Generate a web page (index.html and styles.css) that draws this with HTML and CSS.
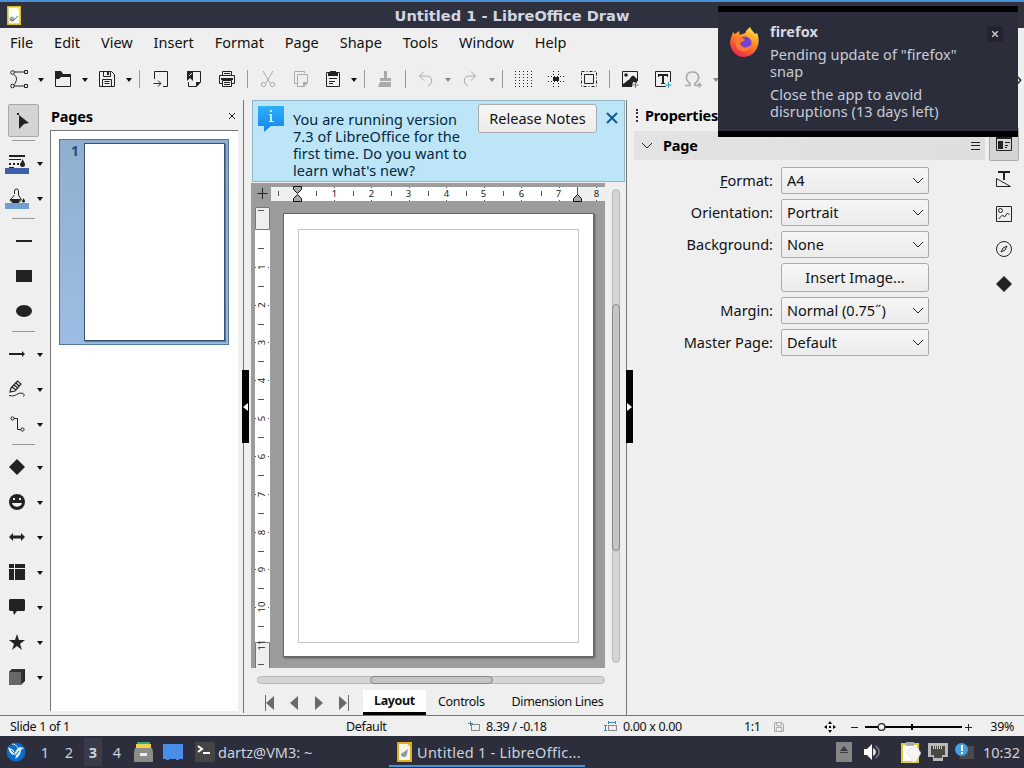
FILE: index.html
```html
<!DOCTYPE html>
<html lang="en">
<head>
    <meta charset="UTF-8">
    <meta name="viewport" content="width=device-width, initial-scale=1.0">
    <title>Untitled 1 - LibreOffice Draw</title>
    <link rel="stylesheet" href="styles.css">
</head>
<body>
    <!-- title bar -->
    <header class="titlebar">
        <svg class="app-icon" width="14" height="19" viewBox="0 0 14 19"><path d="M.8.8h12.400v17.400H.8z" fill="#fffef5" stroke="#d9bd27" stroke-width="1.600"/><path d="M9 1h4v4z" fill="#f5df70"/><circle cx="5" cy="13" r="2.500" fill="#aab"/><path d="M3 13l3 2 5-5" stroke="#656a8c" fill="none"/></svg>
        <h1>Untitled 1 - LibreOffice Draw</h1>
    </header>

    <nav class="menubar">
        <span>File</span><span>Edit</span><span>View</span><span>Insert</span><span>Format</span><span>Page</span><span>Shape</span><span>Tools</span><span>Window</span><span>Help</span>
    </nav>

    <!-- main toolbar -->
    <div class="toolbar">
        <div class="tool split"><svg width="20" height="20" viewBox="0 0 20 20"><path d="M5 3h10M4.500 5c4 3 4 7 0 11M5 17h10" class="ln"/><circle cx="3.500" cy="3.500" r="1.800" class="ln"/><circle cx="3.500" cy="17" r="1.800" class="ln"/><path d="M15.500 1.500h3v3h-3zM15.500 15.500h3v3h-3z" class="ln"/></svg></div><i class="drop"></i>
        <div class="tool split"><svg width="18" height="18" viewBox="0 0 18 18"><path d="M1.500 2.500v14h15v-11h-8l-2-3z" class="ln"/><path d="M1 1h6l2 3h8v3H7L5 9H1z"/></svg></div><i class="drop"></i>
        <div class="tool split"><svg width="18" height="18" viewBox="0 0 18 18"><path d="M1.500 1.500h12l3 3v12h-15zM5.500 1.500v5h7v-5M4.500 16.500v-7h9v7M6.500 11.500h5M6.500 13.500h5" class="ln"/><path d="M9 2h2v3H9z"/></svg></div><i class="drop"></i>
        <i class="sep"></i>
        <div class="tool first"><svg width="18" height="18" viewBox="0 0 18 18"><path d="M2.500 9V1.500h13v15H11M1.500 13.500h7M6 10.500l3 3-3 3" class="ln"/></svg></div>
        <div class="tool"><svg width="18" height="18" viewBox="0 0 18 18"><path d="M7 1.500h8.500V12l-4 4.500h-8V12" class="ln"/><path d="M2 1h6v10L5 8 2 11zM11 12h5l-5 5z"/><path d="M4 6l3-3" stroke="#eee" fill="none"/></svg></div>
        <div class="tool"><svg width="18" height="18" viewBox="0 0 18 18"><path d="M4.500 5V1.500h9V5M4 13.500H1.500v-8h15v8H14M6 3.500h6M4.500 10.500h9v6h-9zM6 12.500h6M6 14.500h6" class="ln"/><path d="M3 8h12v2H3z"/></svg></div>
        <i class="sep"></i>
        <div class="tool off"><svg width="18" height="18" viewBox="0 0 18 18"><path d="M4 1l7 12M14 1L7 13" class="ln"/><circle cx="4.500" cy="14.500" r="2.200" class="ln"/><circle cx="13.500" cy="14.500" r="2.200" class="ln"/></svg></div>
        <div class="tool off"><svg width="18" height="18" viewBox="0 0 18 18"><path d="M5 13.500H2.500v-12h10V3M5.500 4.500h10v8l-3 4h-7z" class="ln"/><path d="M11 12h5l-5 5z"/></svg></div>
        <div class="tool narrow"><svg width="18" height="18" viewBox="0 0 18 18"><path d="M2.500 2.500h13v14h-13zM5 8.500h8M5 11.500h6M5 13.500h4" class="ln"/><path d="M4 2h2V1h6v1h2v4H4z"/></svg></div><i class="drop"></i>
        <i class="sep"></i>
        <div class="tool off"><svg width="18" height="18" viewBox="0 0 18 18"><path d="M8 1h3v7h4v3H4V8h4zM4 12h11v5H2z"/></svg></div>
        <i class="sep"></i>
        <div class="tool off"><svg width="18" height="18" viewBox="0 0 18 18"><path d="M7 1.500L2.500 6 7 10.500M3 6h7c6 0 6 8 1 10" class="ln"/></svg></div><i class="drop off"></i>
        <div class="tool split off"><svg width="18" height="18" viewBox="0 0 18 18"><path d="M10 1.500L14.500 6 10 10.500M14 6H8c-6 0-6 8-1 10" class="ln"/></svg></div><i class="drop off"></i>
        <i class="sep"></i>
        <div class="tool"><svg width="18" height="18" viewBox="0 0 18 18"><path d="M1.500 1v17M5.500 1v17M9.500 1v17M13.500 1v17M17.500 1v17" class="ln dots"/></svg></div>
        <div class="tool"><svg width="18" height="18" viewBox="0 0 18 18"><path d="M6.500 1v17M11.500 1v17M1 6.500h17M1 11.500h17" class="ln dots"/><path d="M6 7h6v4H6z"/></svg></div>
        <div class="tool"><svg width="18" height="18" viewBox="0 0 18 18"><path d="M4.500 4.500h9v9h-9z" class="ln"/><path d="M1.500 1.500h15v15h-15z" class="ln" stroke-dasharray="3 2 1 2"/></svg></div>
        <i class="sep"></i>
        <div class="tool"><svg width="18" height="18" viewBox="0 0 18 18"><path d="M1.500 1.500h15V11M11 16.500H1.500v-15" class="ln"/><path d="M1 14c5-1 4-4 7-4 2-3 3-5 5-4l3 3v4l-4-1-1 5H1z"/><circle cx="5" cy="5" r="1.800"/><path d="M14.500 12v6M11.500 15h6" stroke="#64788b"/></svg></div>
        <div class="tool"><svg width="18" height="18" viewBox="0 0 18 18"><path d="M1.500 1.500h15V12M12 16.500H1.500v-15" class="ln"/><path d="M4 4h10v3h-1V6h-3v7h1v1H7v-1h1V6H5v1H4z"/><path d="M14.500 12v6M11.500 15h6" stroke="#29a0b9"/></svg></div>
        <div class="tool narrow off"><svg class="omega" width="18" height="18" viewBox="0 0 18 18"><path d="M1 15.500h5v-2C0 9 2 2 8.500 2S17 9 11 13.500v2h3M15.500 12.500v5M13 15h5" class="ln" stroke-width="1.700"/></svg></div><i class="drop off"></i>
        <span class="more">›</span>
    </div>

    <main>
        <!-- drawing tools -->
        <aside class="toolbox">
            <div class="row pressed"><svg width="18" height="18" viewBox="0 0 18 18"><path d="M5 3l10 8-5 1-5 5z"/><path d="M3 1h2v2H3z"/></svg></div>
            <hr>
            <div class="row color">
                <svg width="18" height="20" viewBox="0 0 18 20"><path d="M0 2h16v2H0zM0 6h12v1H0z"/><path d="M0 11h10" stroke="#222" stroke-width="2" stroke-dasharray="2 2"/><path d="M0 14h5v1H0zM13.500 6c2 4 2.500 4 2.500 5.500a2.500 2.500 0 01-5 0c0-1.500 1.500-1.500 2.500-5.500z"/></svg><b class="line-color"></b><i class="drop"></i>
            </div>
            <div class="row color">
                <svg width="18" height="20" viewBox="0 0 18 20"><path d="M5.500 6V3a2 2 0 014 0v4l3 5-4 3.500H4L1 12l4.500-5" class="ln"/><path d="M1 11h11l-4 5H5zM14.500 10c1 2 1.500 2 1.500 3a1.500 1.500 0 01-3 0c0-1 1-1 1.500-3z"/></svg><b class="fill-color"></b><i class="drop"></i>
            </div>
            <hr>
            <div class="row single"><svg width="16" height="16" viewBox="0 0 16 16"><path d="M0 7h16v2H0z"/></svg></div>
            <div class="row single"><svg width="16" height="16" viewBox="0 0 16 16"><path d="M0 2h16v12H0z"/></svg></div>
            <div class="row single"><svg width="16" height="16" viewBox="0 0 16 16"><ellipse cx="8" cy="8" rx="8" ry="6"/></svg></div>
            <hr>
            <div class="row"><svg width="16" height="16" viewBox="0 0 16 16"><path d="M0 7h13V5l3 3-3 3V9H0z"/></svg><i class="drop"></i></div>
            <div class="row"><svg width="18" height="18" viewBox="0 0 18 18"><path d="M2 8l6.500-7L12 4l-6 7-5 1zM3 7l4 3M5 5l4 3M7 3l3 3" class="ln" stroke-width="1.200"/><path d="M0 15.500c8 2 8-4 14-2 2 1 1 3 0 3" class="ln"/></svg><i class="drop"></i></div>
            <div class="row"><svg width="16" height="18" viewBox="0 0 16 18"><path d="M5 3.500h3.500v11H12" class="ln"/><circle cx="3.500" cy="3.500" r="1.600" class="ln"/><circle cx="13.500" cy="14.500" r="1.600" class="ln"/></svg><i class="drop"></i></div>
            <hr>
            <div class="row"><svg width="16" height="16" viewBox="0 0 16 16"><path d="M8 0l8 8-8 8-8-8z"/></svg><i class="drop"></i></div>
            <div class="row"><svg width="16" height="16" viewBox="0 0 16 16"><circle cx="8" cy="8" r="8"/><path d="M4 4h2v2H4zM10 4h2v2h-2zM3 9h10c-1 5-9 5-10 0z" fill="#eee"/></svg><i class="drop"></i></div>
            <div class="row"><svg width="16" height="16" viewBox="0 0 16 16"><path d="M0 8l4-4v2.500h8V4l4 4-4 4V9.500H4V12z"/></svg><i class="drop"></i></div>
            <div class="row"><svg width="16" height="16" viewBox="0 0 16 16"><path d="M0 0h5v4H0zM6 0h10v4H6zM0 5h5v11H0zM6 5h10v11H6z"/></svg><i class="drop"></i></div>
            <div class="row"><svg width="16" height="16" viewBox="0 0 16 16"><path d="M1 0h14l1 1v10l-1 1H8l-3 4-1-4H1l-1-1V1z"/></svg><i class="drop"></i></div>
            <div class="row"><svg width="16" height="16" viewBox="0 0 16 16"><path d="M8 0l2 6h6l-5 4 2 6-5-4-5 4 2-6-5-4h6z"/></svg><i class="drop"></i></div>
            <div class="row"><svg width="16" height="16" viewBox="0 0 16 16"><defs><linearGradient id="cube"><stop stop-color="#777"/><stop offset="1" stop-color="#222"/></linearGradient></defs><path d="M0 3l3-3h13v12l-4 4H0z" fill="url(#cube)"/><path d="M0 3h12v13H0z" fill="#686868"/><path d="M0 3l3-3h13l-4 3z" fill="#333"/></svg><i class="drop"></i></div>
        </aside>

        <section class="pages">
            <div class="panel-head"><h2>Pages</h2><svg width="8" height="8" viewBox="0 0 8 8"><path d="M1 1l6 6M7 1L1 7" class="ln"/></svg></div>
            <div class="slides">
                <div class="slide"><span>1</span><div class="thumb"></div></div>
            </div>
        </section>
        <div class="splitter left"><div class="grip"><svg width="7" height="8" viewBox="0 0 7 8"><path d="M6 0v8L1 4z" fill="#fff"/></svg></div></div>

        <section class="editor">
            <div class="infobar">
                <svg width="26" height="26" viewBox="0 0 26 26"><defs><linearGradient id="info" x2="0" y2="1"><stop stop-color="#2cb1f8"/><stop offset="1" stop-color="#1686e8"/></linearGradient></defs><path d="M0 0h26v20H13l-7 6v-6H0z" fill="url(#info)"/><path d="M12 4h2v2h-2zM11 8h3v7h2v1h-5v-1h1V9h-1z" fill="#c3ecff"/></svg>
                <p>You are running version<br>7.3 of LibreOffice for the<br>first time. Do you want to<br>learn what's new?</p>
                <button>Release Notes</button>
                <svg class="dismiss" width="12" height="12" viewBox="0 0 12 12"><path d="M1 1l10 10M11 1L1 11" stroke="#135c8e" stroke-width="2"/></svg>
            </div>
            <div class="work">
                <div class="canvas">
                    <svg class="hruler" width="354" height="24" viewBox="0 0 354 24">
                        <path d="M6.500 10.500h10M11.500 5v11" class="ln"/>
                        <path d="M20 4h334v14H20z" fill="#fff"/><path d="M20 4h26v14H20zM326 4h28v14h-28z" fill="#efefef"/>
                        <path d="M27.500 8v5M65.500 8v5M102.500 8v5M140.500 8v5M177.500 8v5M215.500 8v5M252.500 8v5M290.500 8v5" stroke="#555"/>
                        <path d="M83.500 4v1M83.500 17v1M120.500 4v1M120.500 17v1M158.500 4v1M158.500 17v1M195.500 4v1M195.500 17v1M233.500 4v1M233.500 17v1M270.500 4v1M270.500 17v1M308.500 4v1M308.500 17v1M345.500 4v1M345.500 17v1M326.500 4v14" stroke="#555"/>
                        <g class="nums"><text x="83.500" y="14">1</text><text x="120.500" y="14">2</text><text x="157.500" y="14">3</text><text x="195.500" y="14">4</text><text x="232.500" y="14">5</text><text x="270.500" y="14">6</text><text x="307.500" y="14">7</text><text x="345.500" y="14">8</text></g>
                        <path d="M42.500 3.500h8v3l-4 4-4-4zM42.500 18.500h8v-3l-4-4-4 4zM322.500 18.500h8v-3l-4-4-4 4z" fill="#aaa" stroke="#111"/>
                    </svg>
                    <div class="desk">
                        <svg class="vruler" width="20" height="462" viewBox="0 0 20 462">
                            <path d="M4 0h15v462H4z" fill="#fff"/><path d="M4.500.5h14v22h-14zM4.500 435.500h14v26h-14z" fill="#efefef" stroke="#777"/>
                            <path d="M7 3.500h6M7 41.500h6M7 79.500h6M7 117.500h6M7 154.500h6M7 192.500h6M7 230.500h6M7 268.500h6M7 306.500h6M7 344.500h6M7 381.500h6M7 419.500h6M7 457.500h6" stroke="#555"/>
                            <path d="M4 60.500h1M17 60.500h1M4 98.500h1M17 98.500h1M4 135.500h1M17 135.500h1M4 173.500h1M17 173.500h1M4 211.500h1M17 211.500h1M4 249.500h1M17 249.500h1M4 287.500h1M17 287.500h1M4 325.500h1M17 325.500h1M4 362.500h1M17 362.500h1M4 400.500h1M17 400.500h1" stroke="#555"/>
                            <!-- labels run along the turned axis -->
                            <g class="nums" transform="rotate(-90)"><text x="-60" y="14">1</text><text x="-98" y="14">2</text><text x="-135.500" y="14">3</text><text x="-173.500" y="14">4</text><text x="-211.500" y="14">5</text><text x="-249.500" y="14">6</text><text x="-287.500" y="14">7</text><text x="-325.500" y="14">8</text><text x="-362.500" y="14">9</text><text x="-400" y="14">10</text><text x="-438" y="14">11</text></g>
                        </svg>
                        <div class="paper"><div class="margins"></div></div>
                    </div>
                </div>
                <div class="vscroll"><div></div></div>
            </div>
            <div class="hscroll"><div></div></div>
            <div class="layers">
                <svg width="88" height="16" viewBox="0 0 88 16" fill="#6a6a6a"><path d="M0 0h1v16H0zM9 1v14L1 8zM33 1v14l-8-7zM50 1v14l8-7zM74 1v14l8-7zM83 0h1v16h-1z"/></svg>
                <span class="active">Layout</span><span class="controls">Controls</span><span>Dimension Lines</span>
            </div>
        </section>
        <div class="splitter right"><div class="grip"><svg width="7" height="8" viewBox="0 0 7 8"><path d="M1 0v8l5-4z" fill="#fff"/></svg></div></div>

        <!-- properties sidebar -->
        <section class="props">
            <div class="props-title"><i></i><h2>Properties</h2></div>
            <div class="group-head">
                <svg width="12" height="8" viewBox="0 0 12 8"><path d="M1 1l5 5 5-5" class="ln"/></svg><h2>Page</h2>
                <svg class="burger" width="9" height="8" viewBox="0 0 9 8"><path d="M0 .5h9M0 3.500h9M0 7.500h9" class="ln"/></svg>
            </div>
            <div class="form">
                <label><u>F</u>ormat:</label><div class="select">A4<svg width="12" height="8" viewBox="0 0 12 8"><path d="M1 1l5 5 5-5" class="ln"/></svg></div>
                <label>Orientation:</label><div class="select">Portrait<svg width="12" height="8" viewBox="0 0 12 8"><path d="M1 1l5 5 5-5" class="ln"/></svg></div>
                <label>Background:</label><div class="select">None<svg width="12" height="8" viewBox="0 0 12 8"><path d="M1 1l5 5 5-5" class="ln"/></svg></div>
                <label></label><button>Insert Image...</button>
                <label>Margin:</label><div class="select">Normal (0.75˝)<svg width="12" height="8" viewBox="0 0 12 8"><path d="M1 1l5 5 5-5" class="ln"/></svg></div>
                <label>Master Page:</label><div class="select">Default<svg width="12" height="8" viewBox="0 0 12 8"><path d="M1 1l5 5 5-5" class="ln"/></svg></div>
            </div>
        </section>
        <nav class="decks">
            <div class="deck on"><svg width="16" height="16" viewBox="0 0 16 16"><path d="M.5 2.500h15v12H.5zM9 6.500h5M9 9.500h3M9 11.500h2" class="ln"/><path d="M0 1h16v2H0zM2 5h5v8H2z"/></svg></div>
            <div class="deck"><svg width="16" height="18" viewBox="0 0 16 18"><path d="M2 1h12v2H9v7H7V3H2z"/><path d="M.5 8.500v8h14z" class="ln"/></svg></div>
            <div class="deck"><svg width="16" height="16" viewBox="0 0 16 16"><path d="M.5.5h15v15H.5zM2.500 13l4-4 2 2 3-4 2 2" class="ln"/><circle cx="4.500" cy="4.500" r="2" class="ln"/></svg></div>
            <div class="deck"><svg width="16" height="16" viewBox="0 0 16 16"><circle cx="8" cy="8" r="7.500" class="ln"/><path d="M11 5l-2 4-4 2 2-4z" class="ln"/></svg></div>
            <div class="deck"><svg width="16" height="16" viewBox="0 0 16 16"><path d="M8 0l8 8-8 8-8-8z"/></svg></div>
        </nav>
    </main>

    <footer class="status">
        <span class="st-slide">Slide 1 of 1</span>
        <span class="st-master">Default</span>
        <span class="st-pos"><svg width="12" height="12" viewBox="0 0 12 12"><path d="M2.500 0v5M0 2.500h5" stroke="#3a8fb0"/><path d="M3.500 3.500h8v6h-8z" class="ln" stroke-dasharray="1 1"/></svg>8.39 / -0.18</span>
        <span class="st-size"><svg width="13" height="12" viewBox="0 0 13 12"><path d="M1.500 4v6M0 4.500h3M0 9.500h3M4 1.500h8M4.500 0v3M11.500 0v3" stroke="#3a8fb0"/><path d="M4.500 4.500h8v5h-8z" class="ln" stroke-dasharray="1 1"/></svg>0.00 x 0.00</span>
        <span class="st-scale">1:1</span>
        <svg class="st-save" width="10" height="10" viewBox="0 0 18 18"><path d="M1 1h13l3 3v13H1zM5 1v6h8V1M4 17v-7h10v7" fill="none" stroke="#aaa" stroke-width="1.800"/></svg>
        <svg class="st-fit" width="12" height="12" viewBox="0 0 12 12"><path d="M6 0l2 3H4zM6 12l2-3H4zM0 6l3-2v4zM12 6L9 4v4zM5 5h2v2H5z"/></svg>
        <svg class="st-zoom" width="122" height="12" viewBox="0 0 122 12"><path d="M0 6.500h7M114 6.500h7M117.500 3v7" class="ln"/><path d="M14 6h97" stroke="#000" stroke-width="2"/><path d="M60 3h2v6h-2z"/><circle cx="30.500" cy="6" r="3.400" fill="#f4f4f4" stroke="#222" stroke-width="1.300"/></svg>
        <span class="st-pct">39%</span>
    </footer>

    <!-- desktop panel -->
    <footer class="taskbar">
        <svg class="start" width="20" height="20" viewBox="0 0 20 20"><circle cx="10" cy="10" r="9.500" fill="#0c69c6"/><path d="M2 5c3 2 6 2 7 6 1-3 2-5 5-6l4 1-3 2c0 4-2 7-6 9 1-2 1-3 0-4-4 0-6-3-7-8z" fill="#d8ebff"/><path d="M6 2c3 0 5 2 6 4" stroke="#d8ebff" fill="none"/><path d="M5 8l4 4M9 14l4-5" stroke="#0c69c6" fill="none"/></svg>
        <div class="desks"><span>1</span><span>2</span><span class="cur">3</span><span>4</span></div>
        <svg class="files" width="20" height="20" viewBox="0 0 20 20"><path d="M3 0h13v3H3z" fill="#31a592"/><path d="M2 2h15v5H2z" fill="#eed04a"/><path d="M1 6h17l1 4v10H0V10z" fill="#8c8d88"/><path d="M6 11h7v3H6z" fill="#eee"/></svg>
        <svg class="desktop-ico" width="20" height="16" viewBox="0 0 20 16"><path d="M0 0h20v15h-4v1h-3v-1H6v1H3v-1H0z" fill="#488ee6"/></svg>
        <div class="task term"><svg width="20" height="20" viewBox="0 0 20 20"><path d="M0 0h20v20H0z" fill="#454545"/><path d="M3 4l4 3-4 3M8 11h7" stroke="#fff" stroke-width="2" fill="none"/></svg>dartz@VM3: ~</div>
        <div class="task draw"><svg width="15" height="20" viewBox="0 0 15 20"><path d="M1 1h13v18H1z" fill="#f7f4e8" stroke="#e0ae22" stroke-width="2"/><path d="M10 1h4v5z" fill="#e0ae22"/><path d="M4 12a3 3 0 106 0l1-5-4 3z" fill="#889aa5"/></svg>Untitled 1 - LibreOffic...</div>
        <div class="tray">
            <svg class="t-eject" width="16" height="20" viewBox="0 0 16 20"><path d="M0 0h16v20H0z" fill="#858585"/><path d="M8 4l4 5H4zM4 10h8v1H4z" fill="#3b3c45"/></svg>
            <svg class="t-vol" width="17" height="16" viewBox="0 0 17 16"><path d="M0 5h3l5-5v16l-5-5H0z" fill="#fff"/><path d="M9 4c4 2 4 6 0 8z" fill="#ddd"/><path d="M11.500 2c5 4 5 8 0 12" stroke="#777b88" fill="none" stroke-width="1.500"/></svg>
            <svg class="t-clip" width="20" height="21" viewBox="0 0 20 21"><path d="M1 2h16v18H1z" fill="#fff" stroke="#d9ce38" stroke-width="2"/><path d="M5 0h8v4H5z" fill="#aaa"/><path d="M8 7l8-2 4 6-4 7-4 3-2-6-4-4z" fill="#f5f5f1" stroke="#ccc" stroke-width=".5"/></svg>
            <svg class="t-net" width="20" height="18" viewBox="0 0 20 18"><path d="M0 0h20v14h-5v4H5v-4H0z" fill="#b9b9b9"/><path d="M3 3h14v9h-3v3H6v-3H3z" fill="#4a4a42"/><path d="M5.500 3v3M7.500 3v3M9.500 3v3M11.500 3v3M13.500 3v3" stroke="#ccc"/></svg>
            <svg class="t-upd" width="19" height="18" viewBox="0 0 19 18"><path d="M8 3h11v13H4z" fill="#484a4c"/><circle cx="6.500" cy="6.500" r="6.500" fill="#429fe0"/><path d="M6 2h2v6H6zM6 9h2v2H6z" fill="#fff"/></svg>
            <time>10:32</time>
        </div>
    </footer>

    <div class="notification">
        <svg width="30" height="30" viewBox="0 0 30 30"><defs><linearGradient id="fox" x1=".8" x2=".3" y2="1"><stop stop-color="#ffe94a"/><stop offset=".45" stop-color="#ff8a22"/><stop offset="1" stop-color="#f0214e"/></linearGradient></defs><path d="M3 5l2 2 4-3 1 4c3-2 6-1 6-4l4-4c1 3 4 5 5 7l2-1c5 11-2 24-13 24C3 30-2 18 1 11z" fill="url(#fox)"/><circle cx="15" cy="16" r="6.500" fill="#7542cf"/><path d="M8 10l5 1 2 2-5 3c1 5 7 6 11 2-1 6-9 9-14 3-2-4-1-8 1-11z" fill="#ff7a30"/></svg>
        <div class="note">
            <h3>firefox</h3>
            <p>Pending update of "firefox"<br>snap</p>
            <p>Close the app to avoid<br>disruptions (13 days left)</p>
        </div>
        <div class="note-close"><svg width="6" height="6" viewBox="0 0 6 6"><path d="M0 0l6 6M6 0L0 6" stroke="#ccc" stroke-width="1.400"/></svg></div>
    </div>
</body>
</html>
```
FILE: styles.css
```css
* {
    box-sizing: border-box;
}
body {
    margin: 0;
    width: 1024px;
    height: 768px;
    overflow: hidden;
    position: relative;
    display: flex;
    flex-direction: column;
    background: #efefef;
    color: #111;
    font: 14.5px "Noto Sans", "Open Sans", sans-serif;
}
svg {
    display: block;
    flex: none;
}
h1, h2, h3, p {
    margin: 0;
}
h2 {
    font-size: 14.5px;
    letter-spacing: -0.2px;
    color: #000;
}
.ln {
    fill: none;
    stroke: #222;
}
.off .ln {
    stroke: #aaa;
}
.dots {
    stroke-dasharray: 1 2;
}

/* title + menu */
.titlebar {
    height: 28px;
    border-top: 2px solid #4a90d4;
    background: #2f323e;
    display: flex;
    align-items: center;
    padding: 0 7px;
}
.titlebar h1 {
    flex: 1;
    margin-right: 14px;
    text-align: center;
    color: #d0d6e4;
    font: bold 14.6px "DejaVu Sans", sans-serif;
}
.menubar {
    height: 30px;
    display: flex;
    align-items: center;
    gap: 20.9px;
    padding: 0 0 2px 10px;
}

/* toolbar */
.toolbar {
    height: 42px;
    display: flex;
    align-items: center;
    padding-left: 3px;
}
.tool {
    width: 33px;
    display: flex;
    justify-content: center;
    flex: none;
}
.tool svg {
    fill: #222;
}
.tool.off svg {
    fill: #aaa;
}
.omega {
    margin-right: 3px;
}
.split {
    width: 32px;
}
.narrow {
    width: 31px;
}
.first {
    margin-left: 1px;
}
.drop {
    width: 12px;
    flex: none;
}
.drop::after {
    content: "";
    display: block;
    width: 0;
    margin: 2px auto 0;
    border: 3.5px solid transparent;
    border-top: 4px solid #111;
    border-bottom: 0;
}
.drop.off::after {
    border-top-color: #888;
}
.sep {
    width: 8px;
    height: 18px;
    flex: none;
    background: linear-gradient(#999, #999) 4px 0 / 1px 18px no-repeat;
}
.more {
    margin: 0 2px 3px auto;
    font-size: 18px;
}

main {
    height: 615px;
    display: flex;
}

/* toolbox */
.toolbox {
    width: 50px;
    padding-top: 3px;
    fill: #222;
}
.toolbox hr {
    height: 1px;
    width: 23px;
    margin: 3px 0 4px 12px;
    border: 0;
    background: #999;
}
.row {
    height: 35px;
    display: flex;
    align-items: center;
    padding-left: 9px;
    position: relative;
}
.row > svg {
    margin-right: auto;
}
.row .drop {
    margin: 1px 4px 0 0;
}
.row.pressed {
    width: 31px;
    height: 33px;
    margin: 1px 0 1px 8px;
    padding-left: 5px;
    border: 1px solid #aaa;
    border-radius: 2px;
    background: #d4d4d4;
}
.row.single {
    padding-left: 16px;
}
.row.color b {
    position: absolute;
    left: 5px;
    top: 23px;
    width: 24px;
    height: 6px;
}
.line-color {
    background: #3f5fa9;
}
.fill-color {
    background: #729fcf;
}

/* pages panel */
.pages {
    width: 189px;
    display: flex;
    flex-direction: column;
}
.panel-head {
    height: 30px;
    display: flex;
    align-items: center;
    justify-content: space-between;
    padding: 1px 3px 0 1px;
}
.slides {
    flex: 1;
    margin: 0 1px 4px 0;
    padding: 8px;
    background: #fff;
    border: solid #777;
    border-width: 1px 0 0 1px;
}
.slide {
    width: 170px;
    height: 206px;
    padding: 3px;
    display: flex;
    justify-content: flex-end;
    border: 1px solid #54789b;
    background: linear-gradient(#8fafcf, #9cbde3);
    font-weight: bold;
    color: #2e4d71;
}
.slide span {
    margin-right: 5px;
    line-height: 15px;
}
.thumb {
    width: 141px;
    height: 198px;
    background: #fff;
    border: 1px solid #35526f;
    box-shadow: 1px 1px 1px #657b91;
}

.splitter {
    display: flex;
    align-items: center;
    width: 12px;
}
.left {
    padding-left: 3px;
    margin-bottom: 2px;
    background: linear-gradient(#777, #777) 4px 0 / 1px 100% no-repeat;
}
.right {
    width: 8px;
    padding-bottom: 2px;
    background: linear-gradient(#777, #777) 0 0 / 1px 100% no-repeat;
}
.grip {
    width: 7px;
    height: 73px;
    background: #000;
    display: flex;
    align-items: center;
}

/* editor */
.editor {
    width: 375px;
    display: flex;
    flex-direction: column;
}
.infobar {
    height: 82px;
    margin: 0 1px 1px;
    display: flex;
    align-items: flex-start;
    padding: 5px 6px 0 5px;
    border: 1px solid #92b5c6;
    background: #bde5f8;
}
.infobar p {
    margin: 5px 0 0 9px;
    width: 185px;
    line-height: 17px;
    letter-spacing: 0.05px;
    color: #012840;
    white-space: nowrap;
}
button {
    font: inherit;
    color: #111;
    border: 1px solid #aaa;
    border-radius: 3px;
    background: linear-gradient(#f7f7f7, #ebebeb);
    padding: 0 0 2px;
}
.infobar button {
    width: 119px;
    height: 29px;
    margin-top: -2px;
}
.dismiss {
    margin: 6px 0 0 auto;
}
.work {
    height: 485px;
    display: flex;
}
.canvas {
    width: 354px;
    background: #9c9c9c;
}
.nums {
    font-size: 9.5px;
    text-anchor: middle;
    fill: #222;
}
.desk {
    display: flex;
    height: 461px;
    overflow: hidden;
}
.paper {
    width: 311px;
    height: 444px;
    margin: 6px 0 0 12px;
    padding: 15px 14px 14px;
    border: 1px solid #666;
    background: #fff;
    box-shadow: 1px 1px 2px #555;
}
.margins {
    height: 414px;
    width: 281px;
    border: 1px solid #c4c4c4;
}
.vscroll {
    width: 8px;
    margin: 6px 0 5px 7px;
    padding-top: 114px;
    border-radius: 4px;
    border: 1px solid #b8b8b8;
    background: #d5d5d5;
}
.vscroll div {
    width: 8px;
    margin-left: -1px;
    height: 247px;
    border: 1px solid #888;
    border-radius: 4px;
    background: #c4c4c4;
}
.hscroll {
    width: 348px;
    height: 8px;
    margin: 8px 0 6px 6px;
    border-radius: 4px;
    border: 1px solid #b8b8b8;
    background: #d5d5d5;
}
.hscroll div {
    width: 123px;
    height: 8px;
    margin: -1px 0 0 112px;
    border: 1px solid #888;
    border-radius: 4px;
    background: #c4c4c4;
}
.layers {
    display: flex;
    align-items: center;
    height: 25px;
    padding-left: 14px;
    font-size: 12.5px;
    letter-spacing: -0.35px;
    white-space: nowrap;
}
.layers span {
    padding-bottom: 2px;
}
.layers .active {
    width: 63px;
    height: 25px;
    margin: 0 12px 0 10px;
    padding: 0;
    line-height: 22px;
    text-align: center;
    font-weight: bold;
    background: #fff;
    border-bottom: 3px solid #000;
}
.layers .controls {
    margin-right: 27px;
}

/* sidebar */
.props {
    width: 351px;
}
.props-title {
    height: 31px;
    display: flex;
    align-items: center;
}
.props-title i {
    height: 13px;
    border-left: 2px dotted #333;
    margin: 0 7px 0 2px;
}
.props-title h2, .group-head h2 {
    padding-bottom: 2px;
}
.group-head {
    height: 29px;
    display: flex;
    align-items: center;
    padding: 0 5px 0 7px;
    background: linear-gradient(90deg, #e2e3e2, #dedede);
}
.group-head h2 {
    margin-left: 10px;
}
.burger {
    margin-left: auto;
}
.form {
    display: grid;
    grid-template-columns: 139px 148px;
    grid-template-rows: 27px 27px 27px 29px 27px 27px;
    gap: 5px 8px;
    padding-top: 7px;
    align-items: center;
}
.form label {
    text-align: right;
    padding-bottom: 2px;
}
.form button {
    height: 29px;
}
.select {
    height: 27px;
    display: flex;
    align-items: center;
    justify-content: space-between;
    padding: 0 4px 2px 5px;
    border: 1px solid #aaa;
    border-radius: 2px;
    background: linear-gradient(#f6f6f6, #ebebeb);
}
.select svg {
    margin-top: 2px;
}
.decks {
    width: 30px;
    margin: 27px 0 0 4px;
    fill: #222;
}
.deck {
    height: 35px;
    display: flex;
    align-items: center;
    justify-content: center;
}
.deck.on {
    height: 34px;
    border: 1px solid #aaa;
    border-radius: 2px;
    background: #d4d4d4;
}

/* status bar */
.status {
    height: 21px;
    border-top: 1px solid #777;
    display: flex;
    align-items: center;
    padding: 1px 10px 0;
    font-size: 12.5px;
    letter-spacing: -0.35px;
    white-space: nowrap;
}
.status span {
    display: flex;
    align-items: center;
    gap: 6px;
}
.st-slide { width: 336px; }
.st-master { width: 122px; }
.st-pos { width: 136px; }
.st-size { width: 140px; }
.st-scale { width: 30px; }
.st-save { margin-right: 40px; }
.st-fit { margin-right: 14px; }
.st-zoom { width: 124px; }
.st-pct { margin-left: auto; }

/* desktop panel */
.taskbar {
    height: 32px;
    display: flex;
    align-items: center;
    background: #2c2f3b;
    color: #ccd2df;
    padding: 0 4px 0 6px;
    white-space: nowrap;
}
.desks {
    display: flex;
    margin: 0 5px 0 7px;
}
.desks span {
    width: 24px;
    line-height: 28px;
    text-align: center;
}
.desks .cur {
    width: 18px;
    margin: 0 3px;
    background: #393c48;
    font-weight: bold;
}
.files {
    margin-right: 9px;
}
.task {
    display: flex;
    align-items: center;
    height: 30px;
}
.term {
    gap: 3px;
    margin-left: 12px;
    width: 194px;
}
.draw {
    width: 196px;
    height: 30px;
    padding: 2px 0 0 8px;
    gap: 5px;
    letter-spacing: 0.28px;
    border-bottom: 2px solid #4a90d4;
}
.tray {
    margin-left: auto;
    display: flex;
    align-items: center;
}
.t-eject { margin-right: 12px; }
.t-vol { margin-right: 20px; }
.t-clip { margin-right: 7px; }
.t-net { margin-right: 7px; }
.t-upd { margin-right: 9px; }

/* popup over the window */
.notification {
    position: absolute;
    left: 718px;
    top: 6px;
    width: 300px;
    height: 131px;
    display: flex;
    align-items: flex-start;
    padding: 15px 15px 0 12px;
    border: solid #000;
    border-width: 6px 0;
    background: #2b2e3a;
    color: #c6ccda;
}
.note {
    margin: -4px 0 0 10px;
    white-space: nowrap;
    line-height: 17px;
    letter-spacing: 0.05px;
}
.note h3 {
    font-size: 14.5px;
    line-height: 17px;
    color: #d6dae5;
    margin-bottom: 6px;
}
.note p {
    margin-bottom: 6px;
}
.note-close {
    width: 16px;
    height: 16px;
    margin: -1px 0 0 auto;
    border-radius: 3px;
    background: #222530;
    display: flex;
    align-items: center;
    justify-content: center;
}
```
